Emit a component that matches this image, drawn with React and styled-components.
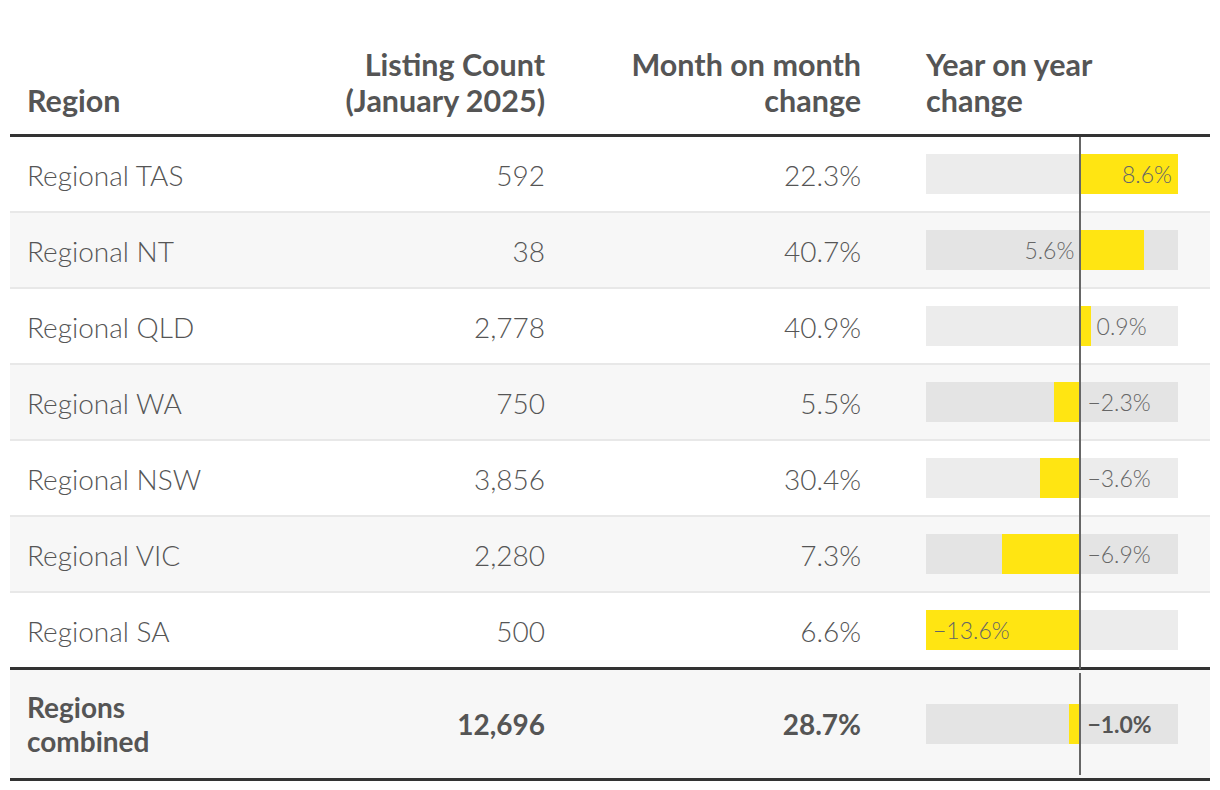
import React from "react";
import styled, { createGlobalStyle } from "styled-components";

const GlobalStyle = createGlobalStyle`
  html, body {
    margin: 0;
    padding: 0;
    background: #ffffff;
  }
  body {
    font-family: Lato, "Open Sans", sans-serif;
    color: #555555;
  }
`;

// domain of the year on year bars
const MIN = -13.6;
const MAX = 8.6;
const SPAN = MAX - MIN;
const ZERO = (-MIN / SPAN) * 100;

const rows = [
  { region: "Regional TAS", count: "592", mom: "22.3%", yoy: 8.6, place: "insideEnd" },
  { region: "Regional NT", count: "38", mom: "40.7%", yoy: 5.6, place: "beforeZero" },
  { region: "Regional QLD", count: "2,778", mom: "40.9%", yoy: 0.9, place: "afterBar" },
  { region: "Regional WA", count: "750", mom: "5.5%", yoy: -2.3, place: "afterZero" },
  { region: "Regional NSW", count: "3,856", mom: "30.4%", yoy: -3.6, place: "afterZero" },
  { region: "Regional VIC", count: "2,280", mom: "7.3%", yoy: -6.9, place: "afterZero" },
  { region: "Regional SA", count: "500", mom: "6.6%", yoy: -13.6, place: "insideStart" },
];

const total = { region: "Regions combined", count: "12,696", mom: "28.7%", yoy: -1.0, place: "afterZero" };

const fmt = (v) => (v < 0 ? "\u2212" : "") + Math.abs(v).toFixed(1) + "%";

function labelStyle(v, place) {
  const w = (Math.abs(v) / SPAN) * 100;
  switch (place) {
    case "insideEnd":
      return { right: `calc(${100 - ZERO - w}% + 6px)` };
    case "beforeZero":
      return { right: `calc(${100 - ZERO}% + 6px)` };
    case "afterBar":
      return { left: `calc(${ZERO + w}% + 6px)` };
    case "insideStart":
      return { left: `calc(${ZERO - w}% + 7px)` };
    default:
      return { left: `calc(${ZERO}% + 7px)` };
  }
}

function YoyBar({ value, place, footer }) {
  const w = (Math.abs(value) / SPAN) * 100;
  const left = value >= 0 ? ZERO : ZERO - w;
  return (
    <Plot>
      <Track>
        <Fill style={{ left: `${left}%`, width: `${w}%` }} />
        <BarLabel $bold={footer} style={labelStyle(value, place)}>
          {fmt(value)}
        </BarLabel>
      </Track>
      <ZeroLine $footer={footer} style={{ left: `${ZERO}%` }} />
    </Plot>
  );
}

export default function App() {
  return (
    <Page>
      <GlobalStyle />
      <Table>
        <HeadRow>
          <HeadCell>Region</HeadCell>
          <HeadCell $right>
            Listing Count
            <br />
            (January 2025)
          </HeadCell>
          <HeadCell $right>
            Month on month
            <br />
            change
          </HeadCell>
          <HeadCell $chart>
            Year on year
            <br />
            change
          </HeadCell>
        </HeadRow>

        {rows.map((r, i) => (
          <BodyRow key={r.region} $shaded={i % 2 === 1} $last={i === rows.length - 1}>
            <Cell>{r.region}</Cell>
            <Cell $right>{r.count}</Cell>
            <Cell $right>{r.mom}</Cell>
            <ChartCell>
              <YoyBar value={r.yoy} place={r.place} />
            </ChartCell>
          </BodyRow>
        ))}

        <FootRow>
          <Cell $bold $footer>
            Regions
            <br />
            combined
          </Cell>
          <Cell $right $bold $footer>
            {total.count}
          </Cell>
          <Cell $right $bold $footer>
            {total.mom}
          </Cell>
          <ChartCell>
            <YoyBar value={total.yoy} place={total.place} footer />
          </ChartCell>
        </FootRow>
      </Table>
    </Page>
  );
}

const Page = styled.div`
  padding: 46px 10px 10px;
`;

const Table = styled.div`
  width: 1200px;
  display: flex;
  flex-direction: column;
`;

const grid = `
  display: grid;
  grid-template-columns: 290px 262px 316px 1fr;
`;

const HeadRow = styled.div`
  ${grid}
  align-items: end;
  border-bottom: 3px solid #333333;
  padding-bottom: 16px;
`;

const HeadCell = styled.div`
  font-size: 30.5px;
  line-height: 36px;
  font-weight: 700;
  color: #555555;
  padding: ${(p) => (p.$chart ? "0 17px 0 48px" : "0 17px")};
  text-align: ${(p) => (p.$right ? "right" : "left")};
`;

const BodyRow = styled.div`
  ${grid}
  height: 74px;
  background: ${(p) => (p.$shaded ? "#f7f7f7" : "#ffffff")};
  border-bottom: ${(p) => (p.$last ? "none" : "2px solid #e8e8e8")};
`;

const FootRow = styled.div`
  ${grid}
  background: #f7f7f7;
  border-top: 3px solid #333333;
  border-bottom: 3px solid #333333;
`;

const Cell = styled.div`
  display: flex;
  align-items: center;
  justify-content: ${(p) => (p.$right ? "flex-end" : "flex-start")};
  text-align: ${(p) => (p.$right ? "right" : "left")};
  padding: ${(p) => (p.$footer ? "20px 17px" : "2px 17px 0")};
  font-size: 28px;
  line-height: 34px;
  font-weight: ${(p) => (p.$bold ? 700 : 300)};
  color: #555555;
`;

const ChartCell = styled.div`
  display: flex;
  align-items: stretch;
  padding-left: 48px;
`;

const Plot = styled.div`
  position: relative;
  width: 252px;
  display: flex;
  align-items: center;
`;

const Track = styled.div`
  position: relative;
  width: 100%;
  height: 40px;
  background: rgba(0, 0, 0, 0.075);
`;

const Fill = styled.div`
  position: absolute;
  top: 0;
  bottom: 0;
  background: #ffe512;
`;

const BarLabel = styled.span`
  position: absolute;
  top: 0;
  bottom: 0;
  display: flex;
  align-items: center;
  font-size: 23px;
  font-weight: ${(p) => (p.$bold ? 700 : 300)};
  color: ${(p) => (p.$bold ? "#555555" : "#666666")};
  white-space: nowrap;
`;

const ZeroLine = styled.div`
  position: absolute;
  top: ${(p) => (p.$footer ? "3px" : "0")};
  bottom: ${(p) => (p.$footer ? "3px" : "-2px")};
  width: 2px;
  margin-left: -1px;
  background: #666666;
`;
